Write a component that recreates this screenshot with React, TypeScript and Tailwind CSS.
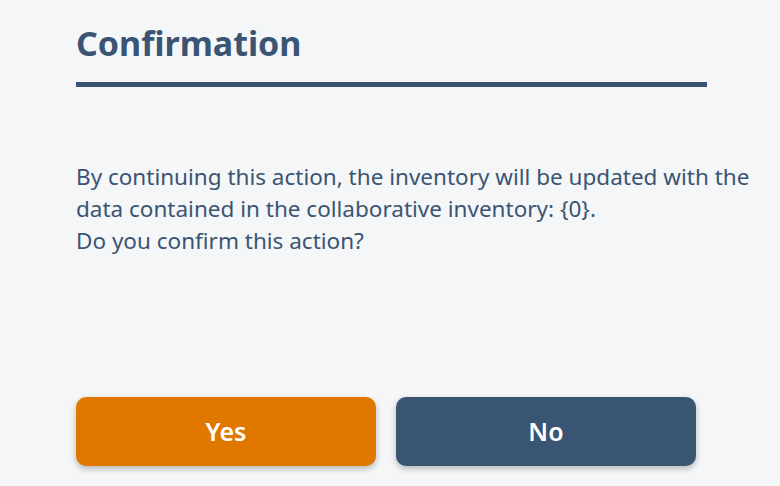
export default function App() {
  return (
    <div
      className="h-[486px] w-[780px] overflow-hidden bg-[#f5f6f8] pl-[76px] text-[#3a5473]"
      style={{ fontFamily: '"Noto Sans", "Open Sans", sans-serif' }}
    >
      <div className="w-[631px] pt-[20px]">
        <h1 className="text-[34px] font-bold leading-[46px]">Confirmation</h1>
        <div className="mt-[16px] h-[5px] bg-[#3a5473]" />
      </div>

      <div className="mt-[74px] text-[22.5px] leading-[32px]">
        <p className="whitespace-nowrap">By continuing this action, the inventory will be updated with the</p>
        <p className="whitespace-nowrap">data contained in the collaborative inventory: {'{0}'}.</p>
        <p className="whitespace-nowrap">Do you confirm this action?</p>
      </div>

      <div className="mt-[140px] flex gap-[20px]">
        <button className="flex h-[69px] w-[300px] items-center justify-center rounded-[10px] bg-[#e07800] text-[25px] font-semibold text-white shadow-[0_3px_6px_rgba(0,0,0,0.25)]">
          Yes
        </button>
        <button className="flex h-[69px] w-[300px] items-center justify-center rounded-[10px] bg-[#3a5473] text-[25px] font-semibold text-white shadow-[0_3px_6px_rgba(0,0,0,0.25)]">
          No
        </button>
      </div>
    </div>
  );
}
